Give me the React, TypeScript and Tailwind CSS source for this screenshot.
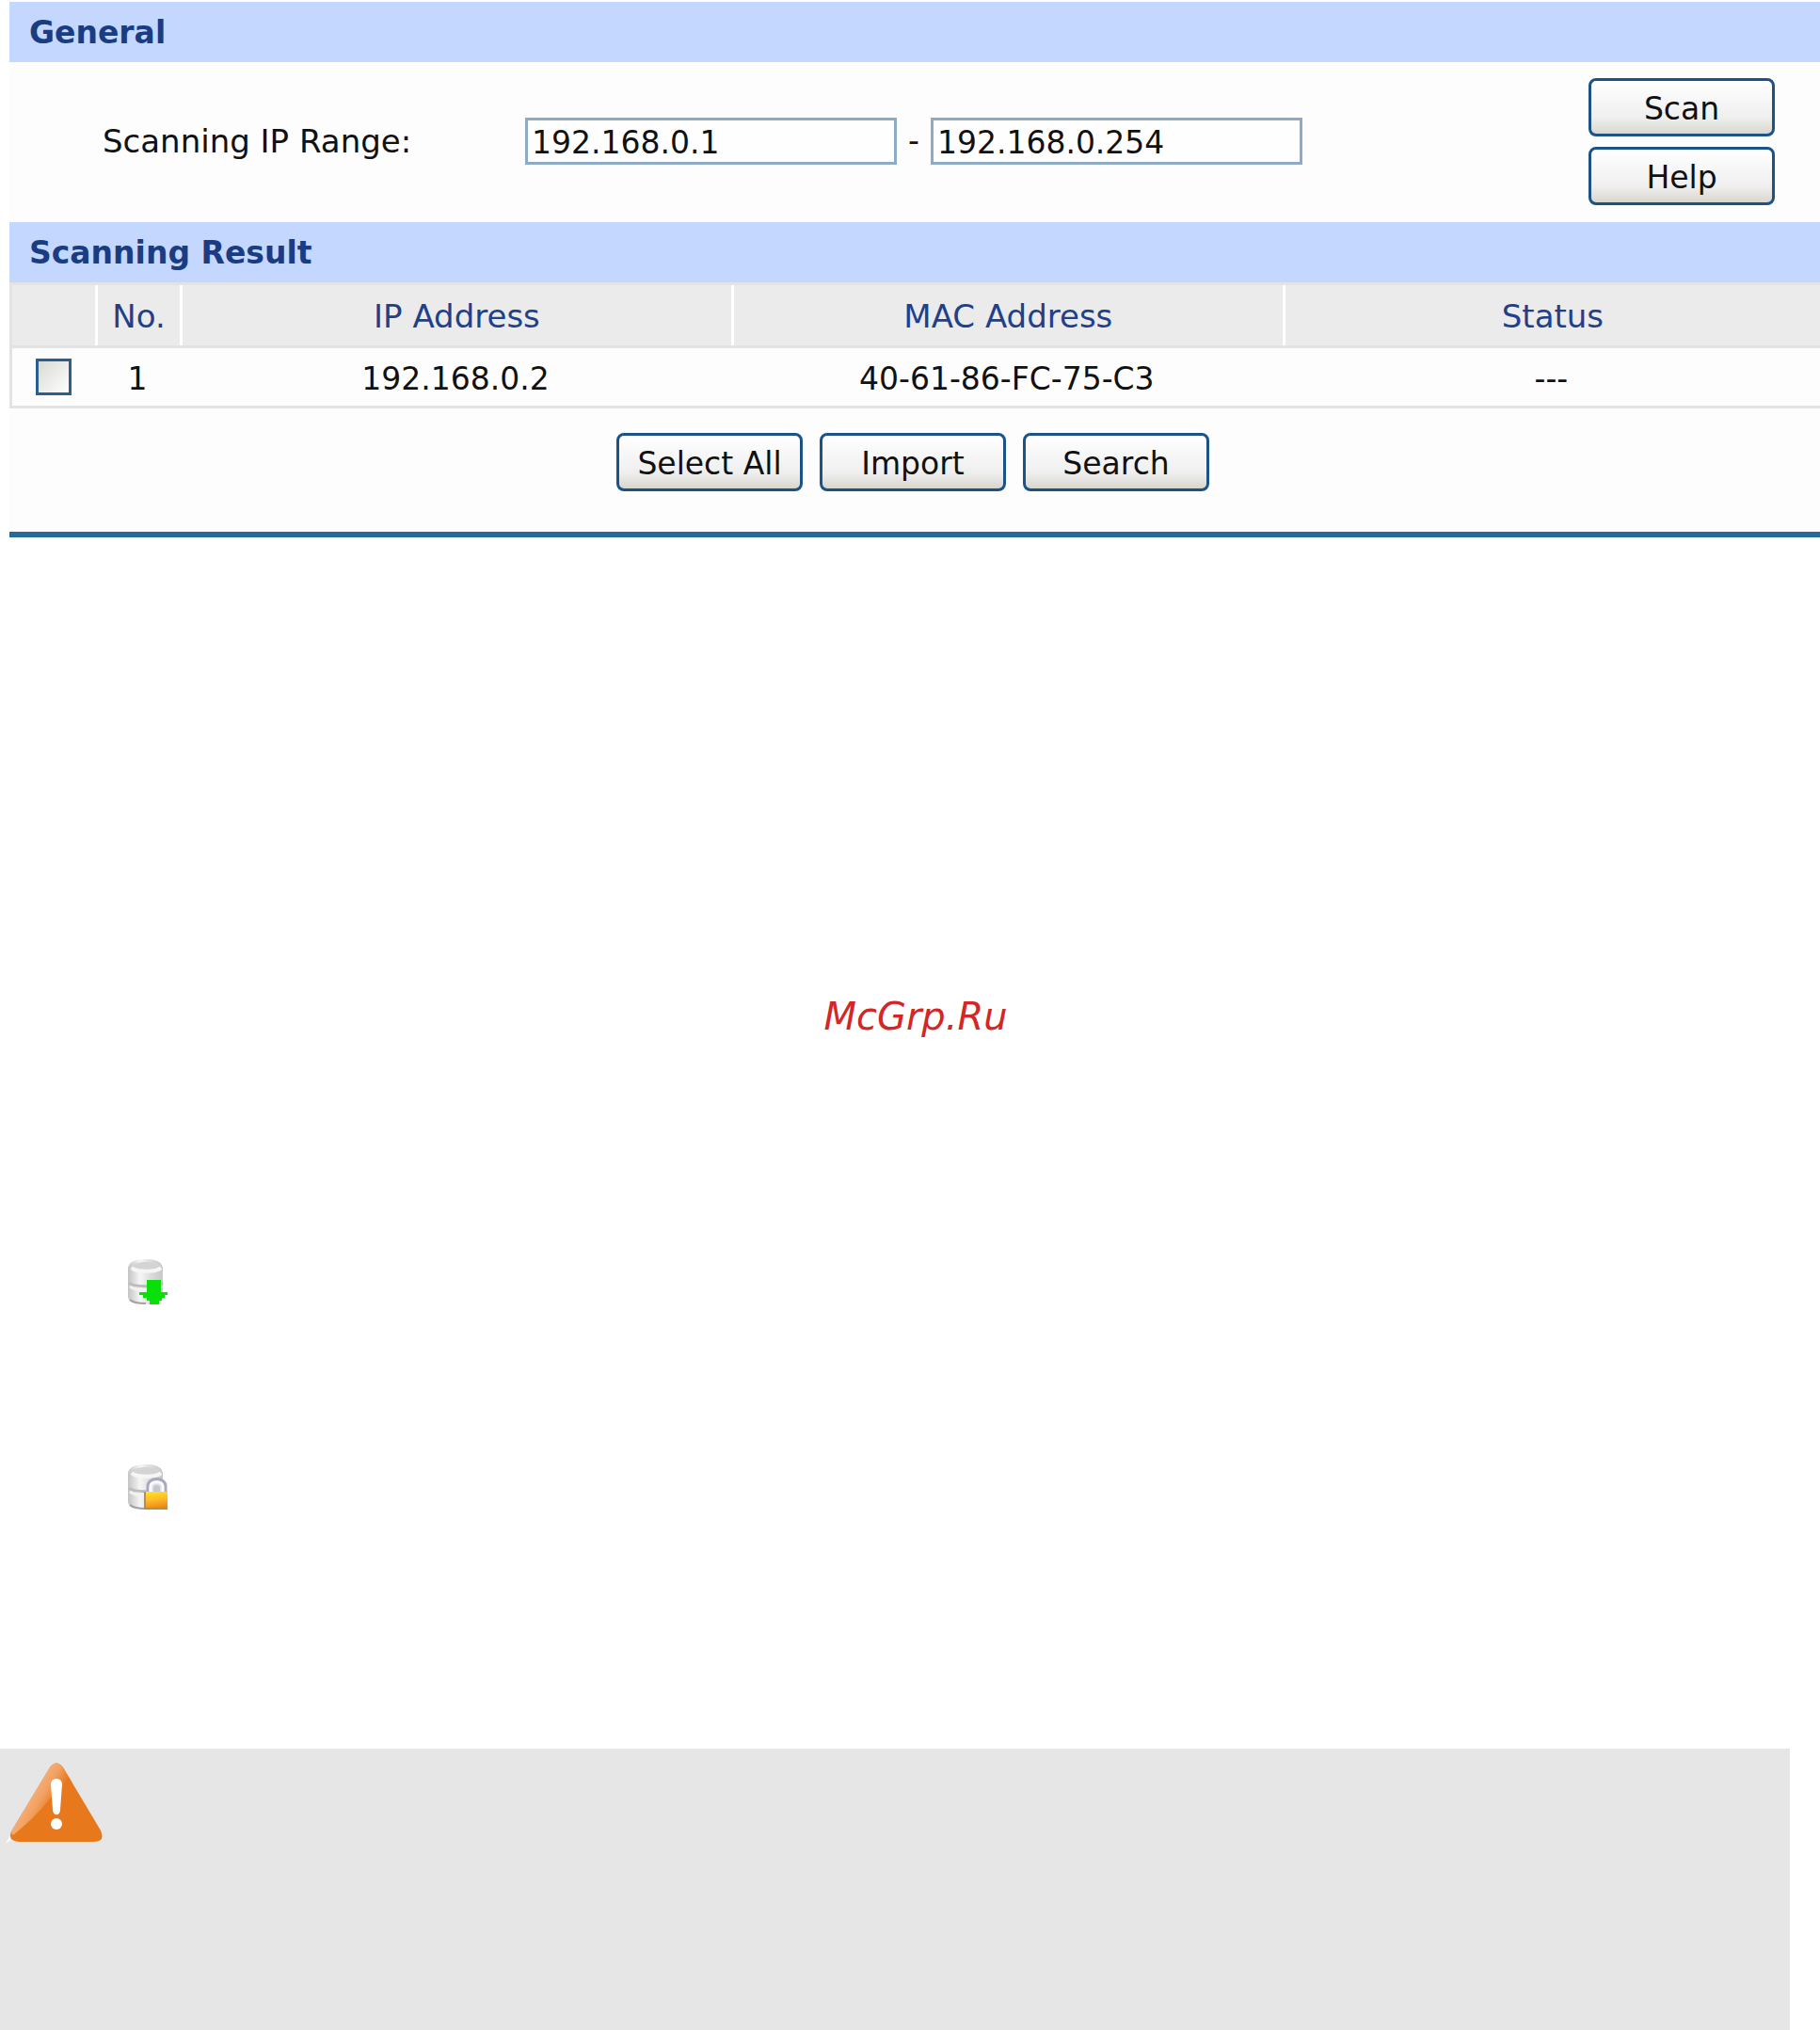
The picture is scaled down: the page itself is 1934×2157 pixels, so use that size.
import React from 'react';

type Host = { no: number; ip: string; mac: string; status: string };

const hosts: Host[] = [
  { no: 1, ip: '192.168.0.2', mac: '40-61-86-FC-75-C3', status: '---' },
];

const SectionTitle: React.FC<{ children: React.ReactNode }> = ({ children }) => (
  <h2 className="h-16 bg-[#c4d8ff] pl-[21px] text-[33px] leading-[66px] font-bold text-[#1a3c82]">{children}</h2>
);

const Button: React.FC<{ children: React.ReactNode }> = ({ children }) => (
  <button
    type="button"
    className="h-[62px] w-[198px] rounded-lg border-[3px] border-[#1b5288] bg-linear-to-b from-white via-[#efefef] via-70% to-[#d8d6ce] pt-1 text-[33px] leading-[52px] whitespace-nowrap text-[#111]"
  >
    {children}
  </button>
);

const IpInput: React.FC<{ label: string; value: string }> = ({ label, value }) => (
  <input
    type="text"
    aria-label={label}
    defaultValue={value}
    className="h-[50px] w-[395px] border-[3px] border-[#8eabc6] bg-[#fefefe] px-1 pt-0.5 text-[33px] text-[#111] outline-none"
  />
);

const Cylinder: React.FC<{ id: string }> = ({ id }) => (
  <>
    <defs>
      <linearGradient id={id} x1="0" x2="1" y1="0" y2="0">
        <stop offset="0" stopColor="#c4c4c4" />
        <stop offset="0.35" stopColor="#f6f6f6" />
        <stop offset="0.65" stopColor="#dcdcdc" />
        <stop offset="1" stopColor="#c8c8c8" />
      </linearGradient>
    </defs>
    <path d="M0 9C1 3 8 0 19 0s17 3 18 9v31c0 5-7 8-18 8S0 45 0 40z" fill={`url(#${id})`} />
    <ellipse cx="19" cy="7" rx="14" ry="4" fill="#d4d4d4" />
    <path d="M4 9c4 5 26 5 31 0" fill="none" stroke="#f6f6f6" strokeWidth="4" />
    <path d="M1 25c5 5 30 5 36 0" fill="none" stroke="#bcbcbc" strokeWidth="3" />
    <path d="M2 29c5 5 28 5 34 0" fill="none" stroke="#f2f2f2" strokeWidth="3" />
    <path d="M2 43c3 3 9 4 17 4" fill="none" stroke="#a2a2a2" strokeWidth="2" />
  </>
);

const ImportIcon: React.FC = () => (
  <svg viewBox="0 0 42 48" className="h-12 w-[42px]" aria-hidden="true">
    <Cylinder id="cylinder-import" />
    <path d="M20 22h15v13h7v3h-3v3h-3v3h-3v4H23v-4h-3v-3h-4v-3h-4v-3h8z" fill="#09e009" />
  </svg>
);

const LockIcon: React.FC = () => (
  <svg viewBox="0 0 42 48" className="h-12 w-[42px]" aria-hidden="true">
    <Cylinder id="cylinder-lock" />
    <defs>
      <linearGradient id="lock-body" x1="0.2" x2="0.4" y1="0" y2="1">
        <stop offset="0" stopColor="#ffe61f" />
        <stop offset="0.5" stopColor="#ffb72a" />
        <stop offset="1" stopColor="#ea8410" />
      </linearGradient>
    </defs>
    <path d="M21 30V23c0-10 19-10 19 0v7" fill="#dedee8" />
    <path d="M21 30V23c0-10 19-10 19 0v7" fill="none" stroke="#a9a9bd" strokeWidth="3" />
    <path d="M24 30V24c0-7 13-7 13 0v6" fill="none" stroke="#fafaff" strokeWidth="3" />
    <path d="M27 30v-5c0-4 7-4 7 0v5z" fill="#c6c6d2" />
    <rect x="17" y="29" width="25" height="19" fill="url(#lock-body)" />
    <path d="M18 29v18h24" fill="none" stroke="#c98a35" strokeWidth="2" />
  </svg>
);

const WarningIcon: React.FC = () => (
  <svg viewBox="0 0 103 87" className="h-[87px] w-[103px]" aria-hidden="true">
    <defs>
      <linearGradient id="warning-shine" gradientUnits="userSpaceOnUse" x1="30" y1="26" x2="53" y2="40">
        <stop offset="0" stopColor="#f5b27c" />
        <stop offset="0.5" stopColor="#f2a060" />
        <stop offset="1" stopColor="#e8781c" />
      </linearGradient>
    </defs>
    <path d="M0 86l5-7v5z" fill="#fff" />
    <path d="M47 6q7-9 14 0l40 67q5 12-7 12H14Q2 84 6 74z" fill="#e8781c" />
    <path d="M47 6q7-9 14 0l10 17Q54 30 43 44T8 78Q5 76 7 72z" fill="url(#warning-shine)" />
    <path d="M48 24c0-8 12-8 12 0l-2 27c0 7-8 7-8 0z" fill="#fff" />
    <ellipse cx="54" cy="66" rx="6" ry="6" fill="#fff" />
  </svg>
);

export default function App() {
  return (
    <div className="flex min-h-screen flex-col bg-white pt-0.5 font-['DejaVu_Sans',Verdana,sans-serif]">
      <main className="ml-2.5 border-b-[6px] border-[#266a98] bg-[#fdfdfd]">
        <SectionTitle>General</SectionTitle>
        <div className="flex h-[170px] items-center pr-12 pb-0.5">
          <span className="w-[448px] shrink-0 pl-[99px] text-[34px] whitespace-nowrap text-[#111]">Scanning IP Range:</span>
          <div className="ml-[100px] flex items-center gap-3 text-[33px] text-[#111]">
            <IpInput label="First address" value="192.168.0.1" />
            <span>-</span>
            <IpInput label="Last address" value="192.168.0.254" />
          </div>
          <div className="ml-auto flex flex-col gap-[11px]">
            <Button>Scan</Button>
            <Button>Help</Button>
          </div>
        </div>

        <SectionTitle>Scanning Result</SectionTitle>
        <table className="w-full table-fixed border-separate border-spacing-0 border-y-[3px] border-l-[3px] border-[#e3e3e3] text-center text-[33px]">
          <colgroup>
            <col className="w-[88px]" />
            <col className="w-[90px]" />
            <col className="w-[30.5%]" />
            <col className="w-[30.5%]" />
            <col />
          </colgroup>
          <thead>
            <tr className="h-16 bg-[#ebebeb] text-[34px] text-[#1f408a]">
              <th className="p-0" aria-label="Selected" />
              <th className="border-l-[3px] border-white p-0 pt-0.5 font-normal">No.</th>
              <th className="border-l-[3px] border-white p-0 pt-0.5 font-normal">IP Address</th>
              <th className="border-l-[3px] border-white p-0 pt-0.5 font-normal">MAC Address</th>
              <th className="border-l-[3px] border-white p-0 pt-0.5 font-normal">Status</th>
            </tr>
          </thead>
          <tbody>
            {hosts.map(host => (
              <tr key={host.no} className="h-16 text-[#111]">
                <td className="border-t-[3px] border-[#e3e3e3] p-0">
                  <input
                    type="checkbox"
                    aria-label={`Select ${host.ip}`}
                    className="mx-auto block h-[39px] w-[38px] appearance-none border-[3px] border-[#2a5f90] bg-linear-to-br from-[#d9d9d4] to-white"
                  />
                </td>
                <td className="border-t-[3px] border-[#e3e3e3] p-0 pt-1">{host.no}</td>
                <td className="border-t-[3px] border-[#e3e3e3] p-0 pt-1">{host.ip}</td>
                <td className="border-t-[3px] border-[#e3e3e3] p-0 pt-1">{host.mac}</td>
                <td className="border-t-[3px] border-[#e3e3e3] p-0 pt-1">{host.status}</td>
              </tr>
            ))}
          </tbody>
        </table>

        <div className="flex justify-center gap-[18px] pt-[26px] pr-1 pb-[43px]">
          <Button>Select All</Button>
          <Button>Import</Button>
          <Button>Search</Button>
        </div>
      </main>

      <p className="mt-[484px] pl-3 text-center text-[40px] leading-[50px] text-[#d32626] italic">McGrp.Ru</p>

      <div className="mt-[233px] flex flex-col gap-[170px] pl-[136px]">
        <ImportIcon />
        <LockIcon />
      </div>

      <aside className="mt-[254px] mr-8 flex-1 bg-[#e6e6e6] pt-[14px] pl-1.5">
        <WarningIcon />
      </aside>
    </div>
  );
}
